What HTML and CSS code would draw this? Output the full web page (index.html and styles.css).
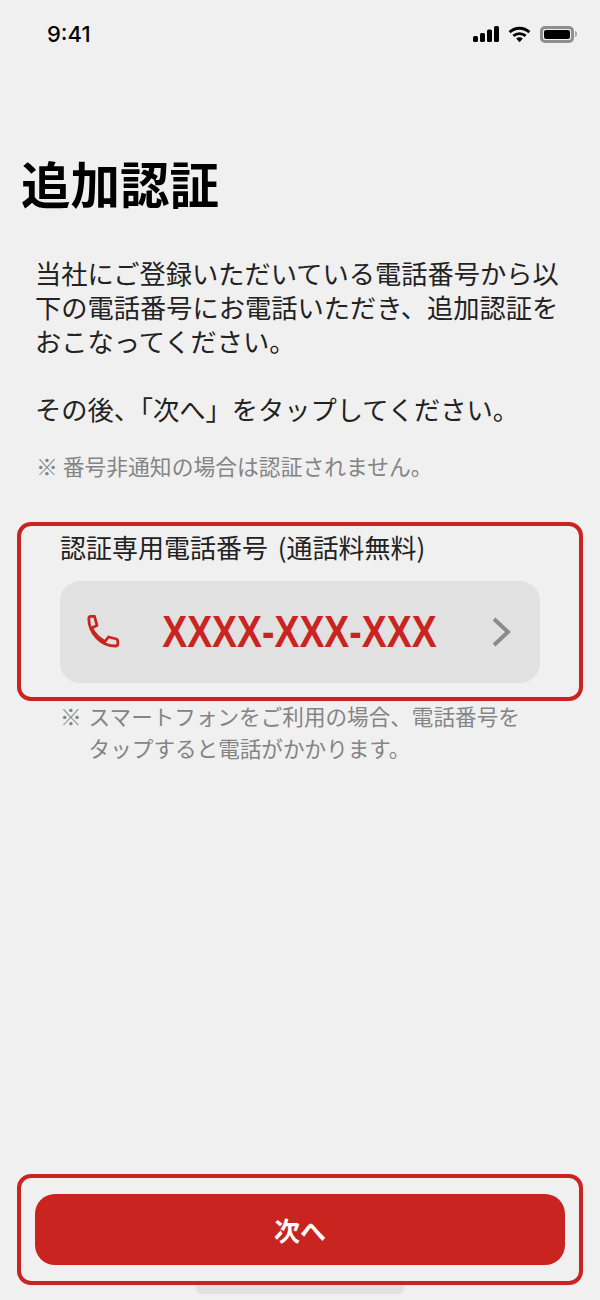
FILE: index.html
```html
<!DOCTYPE html>
<html lang="ja">
<head>
  <meta charset="UTF-8" />
  <meta name="viewport" content="width=device-width, initial-scale=1" />
  <title>追加認証</title>
  <link rel="stylesheet" href="styles.css">
</head>
<body>
  <div class="screen">
    <div class="status-bar">
      <span class="time">9:41</span>
      <div class="status-icons">
        <svg class="signal" width="26" height="16" viewBox="0 0 26 16" fill="#000">
          <rect x="0" y="10" width="5" height="6" rx="1.5" />
          <rect x="7" y="7" width="5" height="9" rx="1.5" />
          <rect x="14" y="3.5" width="5" height="12.5" rx="1.5" />
          <rect x="21" y="0" width="5" height="16" rx="1.5" />
        </svg>
        <svg class="wifi" width="23" height="17" viewBox="0 0 24 18" fill="none" stroke="#000" stroke-width="3">
          <path d="M1.5 6.5C7.5 1 16.5 1 22.5 6.5" />
          <path d="M5.5 10.5C9.3 7.2 14.7 7.2 18.5 10.5" />
          <path d="M8.5 13.2L12 17.2L15.5 13.2C13.4 11.6 10.6 11.6 8.5 13.2Z" fill="#000" stroke="none" />
        </svg>
        <div class="battery"><div class="battery-fill"></div></div>
        <div class="battery-cap"></div>
      </div>
    </div>

    <h1>追加認証</h1>

    <div class="intro">
      <p>当社にご登録いただいている電話番号から以下の電話番号にお電話いただき、追加認証をおこなってください。</p>
      <p>その後、「次へ」をタップしてください。</p>
    </div>
    <p class="caution">※ 番号非通知の場合は認証されません。</p>

    <div class="call-box">
      <div class="call-label">認証専用電話番号 (通話料無料)</div>
      <div class="call-row">
        <svg class="phone-icon" width="34" height="34" viewBox="0 0 34 34" fill="none" stroke="#c9241f" stroke-width="2.8" stroke-linejoin="round" stroke-linecap="round">
          <path d="M1.8 3.5C1.8 2 2.8 1.3 4 1.3H7.5L10 10.5L4.5 13C7.5 19 12 23.5 18 26.5L21.5 22L29.5 24C30.5 24.3 30.8 25 30.8 26V29C30.8 30.5 29.8 31 28.5 31C14 31 1.8 18 1.8 3.5Z" />
        </svg>
        <span class="call-number">XXXX-XXX-XXX</span>
        <svg class="chevron" width="34" height="30" viewBox="-14 0 34 30" fill="none" stroke="#8a8a8a" stroke-width="4">
          <path d="M3 2L17 15L3 28" />
        </svg>
      </div>
    </div>

    <div class="call-note">
      <span>※</span>
      <span>スマートフォンをご利用の場合、電話番号をタップすると電話がかかります。</span>
    </div>

    <div class="next-box">
      <button class="next-btn">次へ</button>
    </div>
    <div class="home-bar"></div>
  </div>
</body>
</html>
```

FILE: styles.css
```css
* {
  box-sizing: border-box;
}
body {
  margin: 0;
  background: #f0f0f0;
  color: #111;
  font-family: "Noto Sans CJK JP", "Noto Sans", sans-serif;
}
.screen {
  display: flex;
  flex-direction: column;
  height: 1300px;
  padding: 0 17px;
}
.status-bar {
  display: flex;
  justify-content: space-between;
  align-items: center;
  height: 28px;
  margin-top: 20px;
  padding: 0 6px 0 30px;
}
.time {
  font-family: Inter, sans-serif;
  font-size: 22px;
  font-weight: 500;
  color: #000;
}
.status-icons {
  display: flex;
  align-items: center;
}
.wifi {
  margin-left: 9px;
}
.battery {
  width: 34px;
  height: 17px;
  margin-left: 9px;
  padding: 1px;
  border: 3px solid #8e8e8e;
  border-radius: 5px;
}
.battery-fill {
  height: 100%;
  background: #000;
  border-radius: 2px;
}
.battery-cap {
  width: 2px;
  height: 6px;
  margin-left: 1px;
  background: #aaa;
  border-radius: 0 2px 2px 0;
}
h1 {
  margin: 99px 0 0 4px;
  font-size: 49.5px;
  line-height: 72px;
  font-weight: 700;
  color: #000;
}
.intro {
  margin: 37px 0 0 18px;
  width: 530px;
  font-size: 26.25px;
  line-height: 34px;
  color: #222;
}
.intro p {
  margin: 0 0 34px;
}
.intro p:last-child {
  margin-bottom: 0;
}
.caution {
  margin: 25px 0 0 19px;
  font-size: 21.8px;
  line-height: 30px;
  color: #848484;
}
.call-box {
  margin-top: 41px;
  height: 179px;
  padding: 3px 39px 0;
  border: 4px solid #c9241f;
  border-radius: 14px;
}
.call-label {
  font-size: 26px;
  line-height: 36px;
  word-spacing: 4px;
  color: #222;
}
.call-row {
  display: flex;
  align-items: center;
  justify-content: space-between;
  height: 102px;
  margin-top: 16px;
  padding: 0 29px 0 27px;
  background: #e1e1e1;
  border-radius: 20px;
}
.call-number {
  font-family: "Liberation Sans", sans-serif;
  font-size: 44px;
  font-weight: 700;
  color: #c9241f;
  transform: scaleX(0.85);
}
.call-note {
  display: flex;
  gap: 7px;
  margin: -1px 0 0 43px;
  width: 475px;
  font-size: 21.6px;
  line-height: 32px;
  color: #848484;
}
.next-box {
  margin-top: auto;
  height: 111px;
  padding: 16px 14px;
  border: 4px solid #c9241f;
  border-radius: 14px;
}
.next-btn {
  display: block;
  width: 100%;
  height: 71px;
  border: none;
  border-radius: 20px;
  background: #c9241f;
  color: #fff;
  font-family: inherit;
  font-size: 26px;
  font-weight: 700;
}
.home-bar {
  width: 208px;
  height: 9px;
  margin: 0 auto 6px;
  background: #e2e2e2;
  border-radius: 0 0 5px 5px;
}
```
